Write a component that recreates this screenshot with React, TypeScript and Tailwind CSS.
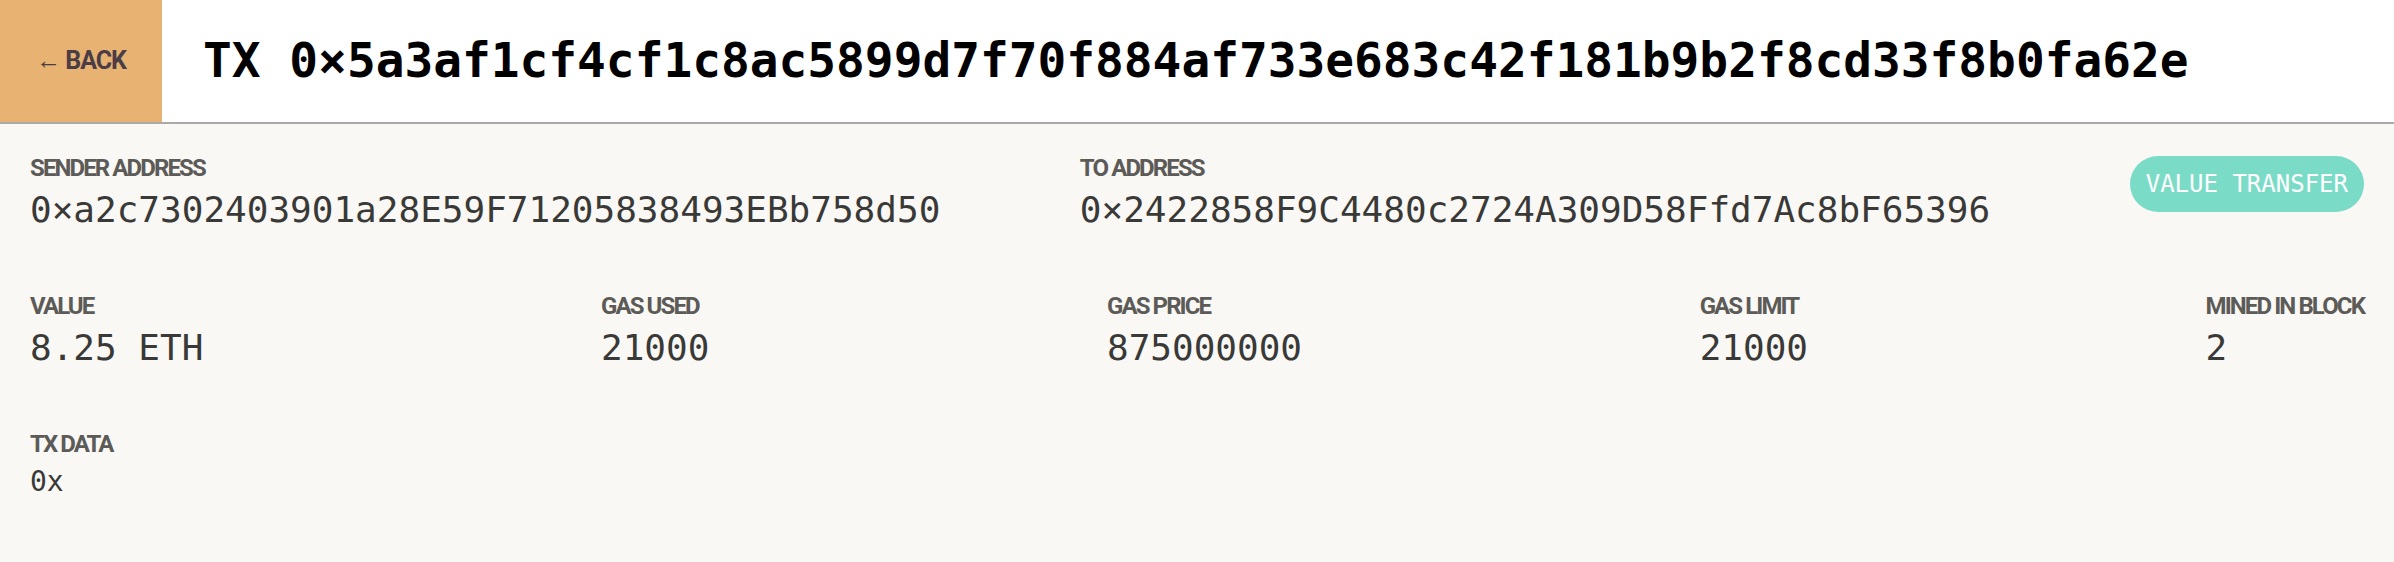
const mono = "font-['DejaVu_Sans_Mono','Liberation_Mono',monospace]";
const label =
  "font-['Roboto','Liberation_Sans',sans-serif] text-[24px] leading-[28px] font-bold tracking-[-1.9px] text-[#5c5b57] uppercase";

function Field({ name, value, small }: { name: string; value: string; small?: boolean }) {
  return (
    <div className="flex flex-col">
      <span className={label}>{name}</span>
      <span
        className={`${mono} mt-[6px] text-[#393937] ${
          small ? "text-[28px] leading-[36px]" : "text-[36px] leading-[44px]"
        }`}
      >
        {value}
      </span>
    </div>
  );
}

export default function App() {
  return (
    <div className="min-h-screen bg-[#f9f8f5]">
      <header className="flex h-[124px] border-b-2 border-[#aaaaaa] bg-white">
        <button className="flex w-[162px] items-center justify-center bg-[#e8b273] font-['Roboto','Liberation_Sans',sans-serif] text-[25px] font-bold tracking-[-1px] text-[#4b3d45]">
          ← BACK
        </button>
        <h1 className={`${mono} flex items-center pl-[41px] text-[47.8px] font-bold text-black`}>
          TX 0×5a3af1cf4cf1c8ac5899d7f70f884af733e683c42f181b9b2f8cd33f8b0fa62e
        </h1>
      </header>

      <main className="flex flex-col gap-[60px] px-[30px] pt-[30px]">
        <div className="flex items-start justify-between">
          <Field name="Sender Address" value="0×a2c7302403901a28E59F71205838493EBb758d50" />
          <Field name="To Address" value="0×2422858F9C4480c2724A309D58Ffd7Ac8bF65396" />
          <span
            className={`${mono} mt-[2px] flex h-[56px] items-center rounded-full bg-[#7adcc6] px-[16px] text-[24px] text-white`}
          >
            VALUE TRANSFER
          </span>
        </div>

        <div className="flex items-start justify-between">
          <Field name="Value" value="8.25 ETH" />
          <Field name="Gas Used" value="21000" />
          <Field name="Gas Price" value="875000000" />
          <Field name="Gas Limit" value="21000" />
          <Field name="Mined in Block" value="2" />
        </div>

        <div className="flex">
          <Field name="TX Data" value="0x" small />
        </div>
      </main>
    </div>
  );
}
